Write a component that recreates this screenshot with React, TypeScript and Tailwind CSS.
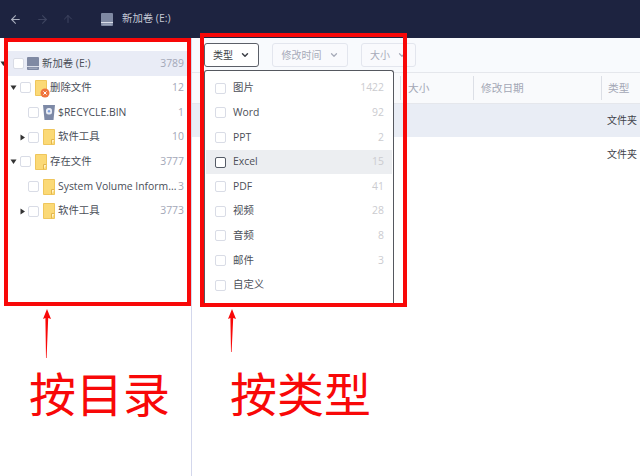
import { ArrowLeft, ArrowRight, ArrowUp, ChevronDown } from 'lucide-react';

const FONT = 'font-["Open_Sans","Noto_Sans_CJK_SC",sans-serif]';

function DriveIcon() {
  return (
    <svg width="12" height="13" viewBox="0 0 12 13" className="shrink-0">
      <rect x="0" y="0" width="12" height="13" rx="1" fill="#7f89a3" />
      <rect x="0" y="9" width="12" height="1" fill="#d9dde8" />
      <rect x="1.5" y="10.7" width="9" height="1" fill="#a9b1c4" />
    </svg>
  );
}

function FolderIcon({ deleted }: { deleted?: boolean }) {
  return (
    <span className="relative w-[12px] h-[16px] shrink-0">
      <svg width="12" height="16" viewBox="0 0 12 16">
        <path d="M0.5 0.5H11.5V15.5H0.5Z" fill="#fbd976" stroke="#efc65c" />
        <path d="M8.5 15.5V10.5H11.5" fill="#fff3c9" stroke="#e3b64c" />
      </svg>
      {deleted && (
        <svg width="10" height="10" viewBox="0 0 10 10" className="absolute left-[5px] top-[8px]">
          <circle cx="5" cy="5" r="4.5" fill="#f0743f" />
          <path d="M3.4 3.4L6.6 6.6M6.6 3.4L3.4 6.6" stroke="#fff" strokeWidth="1" />
        </svg>
      )}
    </span>
  );
}

function RecycleIcon() {
  return (
    <svg width="12" height="15" viewBox="0 0 12 15" className="shrink-0">
      <path d="M0 0H12L10.5 15H1.5Z" fill="#7d89a6" />
      <rect x="3" y="3" width="6" height="6.5" rx="2.5" fill="#e8ecf5" />
      <circle cx="6" cy="6.2" r="1.2" fill="#7d9fda" />
    </svg>
  );
}

function Checkbox({ strong }: { strong?: boolean }) {
  return (
    <span
      className={`w-[11px] h-[11px] shrink-0 rounded-[2px] bg-white border ${
        strong ? 'border-[#555b66]' : 'border-[#d9dce6]'
      }`}
    />
  );
}

function Caret({ dir }: { dir: 'down' | 'right' }) {
  return (
    <svg width="7" height="7" viewBox="0 0 7 7" className="shrink-0">
      {dir === 'down' ? <path d="M0.5 1.5H6.5L3.5 6Z" fill="#333" /> : <path d="M1.5 0.5V6.5L6 3.5Z" fill="#333" />}
    </svg>
  );
}

interface TreeItem {
  level: number;
  name: string;
  count: number;
  caret?: 'down' | 'right';
  icon: 'drive' | 'folder' | 'deleted' | 'recycle';
}

const tree: TreeItem[] = [
  { level: 1, name: '删除文件', count: 12, caret: 'down', icon: 'deleted' },
  { level: 2, name: '$RECYCLE.BIN', count: 1, icon: 'recycle' },
  { level: 2, name: '软件工具', count: 10, caret: 'right', icon: 'folder' },
  { level: 1, name: '存在文件', count: 3777, caret: 'down', icon: 'folder' },
  { level: 2, name: 'System Volume Inform...', count: 3, icon: 'folder' },
  { level: 2, name: '软件工具', count: 3773, caret: 'right', icon: 'folder' },
];

const types = [
  { name: '图片', count: '1422' },
  { name: 'Word', count: '92' },
  { name: 'PPT', count: '2' },
  { name: 'Excel', count: '15', active: true },
  { name: 'PDF', count: '41' },
  { name: '视频', count: '28' },
  { name: '音频', count: '8' },
  { name: '邮件', count: '3' },
  { name: '自定义', count: '' },
];

function TreeRow({ item }: { item: TreeItem }) {
  const isTop = item.level === 1;
  return (
    <div className={`flex items-center h-[24.67px] pr-[7px] ${isTop ? 'pl-[10px]' : 'pl-[19px]'}`}>
      {item.caret ? <Caret dir={item.caret} /> : <span className="w-[7px] shrink-0" />}
      <span className={isTop ? 'ml-[3px] flex' : 'ml-[2px] flex'}>
        <Checkbox />
      </span>
      <span className="ml-[4px] flex">
        {item.icon === 'folder' && <FolderIcon />}
        {item.icon === 'deleted' && <FolderIcon deleted />}
        {item.icon === 'recycle' && <RecycleIcon />}
      </span>
      <span className="ml-[3px] text-[10.4px] text-[#4a4e58] whitespace-nowrap">{item.name}</span>
      <span className="ml-auto text-[10.4px] text-[#a3a8b8]">{item.count}</span>
    </div>
  );
}

function FilterButton({ label, open, width }: { label: string; open?: boolean; width: string }) {
  return (
    <button
      className={`flex items-center justify-center gap-[7px] h-[24px] rounded-[3px] border text-[10px] ${width} ${
        open ? 'border-[#5b5f68] text-[#3c3f47] bg-white' : 'border-[#e3e6ee] text-[#a7abb9] bg-[#f9fafd]'
      }`}
    >
      {label}
      <ChevronDown size={10} strokeWidth={open ? 3.5 : 3} />
    </button>
  );
}

export default function App() {
  return (
    <div className={`relative w-[640px] h-[476px] overflow-hidden bg-white ${FONT}`}>
      <div className="flex items-center h-[38px] bg-[#1d2340] pl-[9px]">
        <ArrowLeft size={13} className="text-[#a9aebd]" />
        <ArrowRight size={13} className="ml-[14px] text-[#3e4460]" />
        <ArrowUp size={12} className="ml-[13px] text-[#3e4460]" />
        <span className="ml-[27px] flex">
          <DriveIcon />
        </span>
        <span className="ml-[9px] text-[10.4px] text-[#c4c8d4]">新加卷 (E:)</span>
      </div>

      <div className="flex h-[438px]">
        <aside className="w-[192px] shrink-0 border-r border-[#d3d7ec] pt-[13px]">
          {/* Root row: its caret sits outside the highlight */}
          <div className="flex items-center h-[24.67px]">
            <Caret dir="down" />
            <div className="flex items-center flex-1 h-full -ml-[3px] mr-[3px] pl-[9px] pr-[4px] bg-[#e9ecf6]">
              <Checkbox />
              <span className="ml-[3px] flex">
                <DriveIcon />
              </span>
              <span className="ml-[3px] text-[10.4px] text-[#4a4e58]">新加卷 (E:)</span>
              <span className="ml-auto text-[10.4px] text-[#a3a8b8]">3789</span>
            </div>
          </div>
          {tree.map((item, i) => (
            <TreeRow key={i} item={item} />
          ))}
        </aside>

        <main className="flex-1 min-w-0">
          <div className="flex items-center h-[34px] bg-[#f8fafd] pl-[12px] gap-[13px]">
            <FilterButton label="类型" open width="w-[55px]" />
            <FilterButton label="修改时间" width="w-[76px]" />
            <FilterButton label="大小" width="w-[55px]" />
          </div>
          <div className="flex items-center h-[32px] bg-[#f9fafc] border-y border-[#e5e7ec] text-[10.7px] text-[#a3a7b5]">
            <div className="w-[209px] h-[24px] border-r border-[#dcdfe6]" />
            <div className="w-[73px] h-[24px] border-r border-[#dcdfe6] pl-[7px] leading-[24px]">大小</div>
            <div className="w-[128px] h-[24px] border-r border-[#dcdfe6] pl-[7px] leading-[24px]">修改日期</div>
            <div className="pl-[6px] leading-[24px]">类型</div>
          </div>
          <div className="flex items-center justify-end h-[33px] bg-[#e9edf5] pr-[3px] text-[10px] text-[#3f424b]">
            文件夹
          </div>
          <div className="flex items-center justify-end h-[35px] pr-[3px] text-[10px] text-[#3f424b]">文件夹</div>
        </main>
      </div>

      {/* Type filter dropdown */}
      <div className="absolute left-[204px] top-[70px] w-[190px] h-[236px] pt-[5px] px-px bg-white border-x border-t border-[#55585f] rounded-t-[3px]">
        {types.map((t) => (
          <div
            key={t.name}
            className={`flex items-center h-[24.6px] pl-[9px] pr-[8px] ${t.active ? 'bg-[#eceef1]' : ''}`}
          >
            <Checkbox strong={t.active} />
            <span className="ml-[7px] text-[10.4px] text-[#4c4f58]">{t.name}</span>
            <span className="ml-auto text-[10.4px] text-[#cbcbcf]">{t.count}</span>
          </div>
        ))}
      </div>

      {/* Red annotations drawn over the screenshot */}
      <div className="absolute left-[4px] top-[38px] w-[187px] h-[268px] border-[4px] border-[#f80808]" />
      <div className="absolute left-[200px] top-[33px] w-[207px] h-[274px] border-[4px] border-[#f80808]" />
      <svg width="12" height="50" viewBox="0 0 12 50" className="absolute left-[41px] top-[309px]">
        <path d="M6 0L10 10L7.2 9L5.6 49H5L4.4 9L2 10Z" fill="#f80808" />
      </svg>
      <svg width="12" height="44" viewBox="0 0 12 44" className="absolute left-[226px] top-[309px]">
        <path d="M6 0L10 10L7.2 9L5.6 43H5L4.4 9L2 10Z" fill="#f80808" />
      </svg>
      <div className="absolute left-[29px] top-[360px] text-[47px] leading-[64px] text-[#f80808] font-['Noto_Sans_CJK_SC',sans-serif]">
        按目录
      </div>
      <div className="absolute left-[230px] top-[360px] text-[47px] leading-[64px] text-[#f80808] font-['Noto_Sans_CJK_SC',sans-serif]">
        按类型
      </div>
    </div>
  );
}
